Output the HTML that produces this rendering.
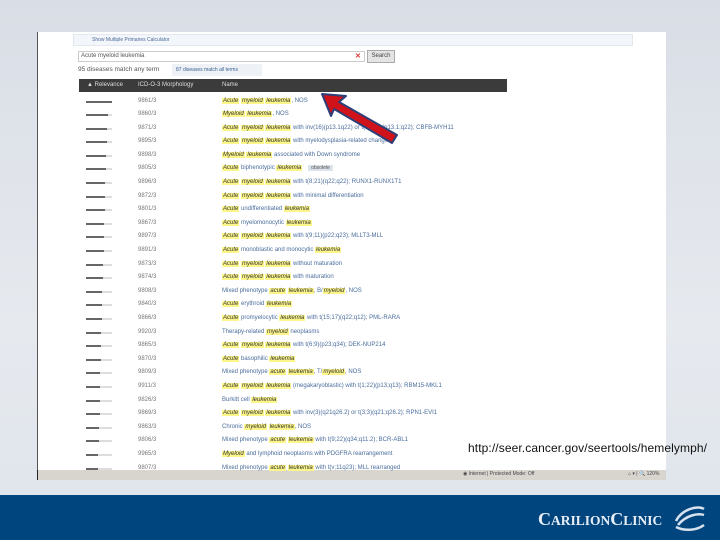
<!DOCTYPE html>
<html><head><meta charset="utf-8"><style>
*{margin:0;padding:0;box-sizing:border-box}
body{width:720px;height:540px;overflow:hidden;background:linear-gradient(#d9dee6,#e6e9ee 60%,#dfe5ec);font-family:"Liberation Sans",sans-serif;position:relative}
.band{position:absolute;left:0;top:495px;width:720px;height:45px;background:#00457e}
.panel{position:absolute;left:37px;top:32px;width:629px;height:438px;background:#fff;border-left:1px solid #555}
.status{position:absolute;left:37px;top:470px;width:629px;height:10px;background:#d8d5cf;border-left:1px solid #222}
.calc{position:absolute;left:73px;top:34px;width:560px;height:12px;background:#f3f6fa;border:1px solid #e3e8ee;font-size:5px;color:#4a6a9a;padding:2px 0 0 18px}
.search{position:absolute;left:78px;top:51px;width:287px;height:11px;border:1px solid #ccc;font-size:6px;color:#555;padding:1px 2px}
.x{position:absolute;left:355px;top:52px;color:#d33;font-size:7px;font-weight:bold}
.btn{position:absolute;left:367px;top:50px;width:28px;height:13px;background:#e4e4e4;border:1px solid #aaa;font-size:6px;color:#444;text-align:center;line-height:11px}
.match{position:absolute;left:78px;top:66px;font-size:6.5px;color:#555}
.tab{position:absolute;left:172px;top:64px;width:90px;height:12px;background:#eef2f7;font-size:5px;color:#3a5e90;padding-top:3px;padding-left:4px;white-space:nowrap}
.head{position:absolute;left:79px;top:79px;width:428px;height:13px;background:#3b3b3b;color:#ddd;font-size:6px;line-height:13px}
.head span{position:absolute}
.rows{position:absolute;left:79px;top:94.5px;width:560px;font-size:6px;line-height:13.6px;color:#4a6c9c}
.r{position:relative;height:13.6px;white-space:nowrap}
.bar{position:absolute;left:7px;top:6px;width:26px;height:2px;background:#ddd}
.bar i{display:block;height:2px;background:#666}
.c{position:absolute;left:59px;color:#777}
.n{position:absolute;left:143px}
b{font-weight:normal;font-style:italic;background:#fbf58a;color:#333;padding:0 1px}
.obs{background:#dde3ea;color:#555;font-size:5px;padding:0 3px;margin-left:4px}
.url{position:absolute;left:468px;top:441px;font-size:12px;color:#111;letter-spacing:0.1px}
.logo{position:absolute;left:538px;top:509px;color:#e8eef5;font-family:"Liberation Serif",serif;font-weight:bold;font-size:18px}
.logo small{font-size:13.5px}
</style></head><body>
<div class="panel"></div>
<div class="status"><span style="position:absolute;left:425px;top:1px;font-size:5px;color:#444">◉ Internet | Protected Mode: Off</span><span style="position:absolute;left:590px;top:1px;font-size:5px;color:#444">⌂ ▾ | 🔍 120%</span></div>
<div class="calc">Show Multiple Primaries Calculator</div>
<div class="search">Acute myeloid leukemia</div><div class="x">✕</div><div class="btn">Search</div>
<div class="match">95 diseases match any term</div><div class="tab">87 diseases match all terms</div>
<div class="head"><span style="left:8px">▲ Relevance</span><span style="left:59px">ICD-O-3 Morphology</span><span style="left:143px">Name</span></div>
<div class="rows">
<div class="r"><div class="bar"><i style="width:26px"></i></div><span class="c">9861/3</span><span class="n"><b>Acute</b> <b>myeloid</b> <b>leukemia</b>, NOS</span></div>
<div class="r"><div class="bar"><i style="width:22px"></i></div><span class="c">9860/3</span><span class="n"><b>Myeloid</b> <b>leukemia</b>, NOS</span></div>
<div class="r"><div class="bar"><i style="width:21px"></i></div><span class="c">9871/3</span><span class="n"><b>Acute</b> <b>myeloid</b> <b>leukemia</b> with inv(16)(p13.1q22) or t(16;16)(p13.1;q22); CBFB-MYH11</span></div>
<div class="r"><div class="bar"><i style="width:21px"></i></div><span class="c">9895/3</span><span class="n"><b>Acute</b> <b>myeloid</b> <b>leukemia</b> with myelodysplasia-related changes</span></div>
<div class="r"><div class="bar"><i style="width:20px"></i></div><span class="c">9898/3</span><span class="n"><b>Myeloid</b> <b>leukemia</b> associated with Down syndrome</span></div>
<div class="r"><div class="bar"><i style="width:20px"></i></div><span class="c">9805/3</span><span class="n"><b>Acute</b> biphenotypic <b>leukemia</b> <span class="obs">obsolete</span></span></div>
<div class="r"><div class="bar"><i style="width:19px"></i></div><span class="c">9896/3</span><span class="n"><b>Acute</b> <b>myeloid</b> <b>leukemia</b> with t(8;21)(q22;q22); RUNX1-RUNX1T1</span></div>
<div class="r"><div class="bar"><i style="width:19px"></i></div><span class="c">9872/3</span><span class="n"><b>Acute</b> <b>myeloid</b> <b>leukemia</b> with minimal differentiation</span></div>
<div class="r"><div class="bar"><i style="width:19px"></i></div><span class="c">9801/3</span><span class="n"><b>Acute</b> undifferentiated <b>leukemia</b></span></div>
<div class="r"><div class="bar"><i style="width:18px"></i></div><span class="c">9867/3</span><span class="n"><b>Acute</b> myelomonocytic <b>leukemia</b></span></div>
<div class="r"><div class="bar"><i style="width:18px"></i></div><span class="c">9897/3</span><span class="n"><b>Acute</b> <b>myeloid</b> <b>leukemia</b> with t(9;11)(p22;q23); MLLT3-MLL</span></div>
<div class="r"><div class="bar"><i style="width:18px"></i></div><span class="c">9891/3</span><span class="n"><b>Acute</b> monoblastic and monocytic <b>leukemia</b></span></div>
<div class="r"><div class="bar"><i style="width:17px"></i></div><span class="c">9873/3</span><span class="n"><b>Acute</b> <b>myeloid</b> <b>leukemia</b> without maturation</span></div>
<div class="r"><div class="bar"><i style="width:17px"></i></div><span class="c">9874/3</span><span class="n"><b>Acute</b> <b>myeloid</b> <b>leukemia</b> with maturation</span></div>
<div class="r"><div class="bar"><i style="width:16px"></i></div><span class="c">9808/3</span><span class="n">Mixed phenotype <b>acute</b> <b>leukemia</b>, B/<b>myeloid</b>, NOS</span></div>
<div class="r"><div class="bar"><i style="width:16px"></i></div><span class="c">9840/3</span><span class="n"><b>Acute</b> erythroid <b>leukemia</b></span></div>
<div class="r"><div class="bar"><i style="width:16px"></i></div><span class="c">9866/3</span><span class="n"><b>Acute</b> promyelocytic <b>leukemia</b> with t(15;17)(q22;q12); PML-RARA</span></div>
<div class="r"><div class="bar"><i style="width:15px"></i></div><span class="c">9920/3</span><span class="n">Therapy-related <b>myeloid</b> neoplasms</span></div>
<div class="r"><div class="bar"><i style="width:15px"></i></div><span class="c">9865/3</span><span class="n"><b>Acute</b> <b>myeloid</b> <b>leukemia</b> with t(6;9)(p23;q34); DEK-NUP214</span></div>
<div class="r"><div class="bar"><i style="width:15px"></i></div><span class="c">9870/3</span><span class="n"><b>Acute</b> basophilic <b>leukemia</b></span></div>
<div class="r"><div class="bar"><i style="width:14px"></i></div><span class="c">9809/3</span><span class="n">Mixed phenotype <b>acute</b> <b>leukemia</b>, T/<b>myeloid</b>, NOS</span></div>
<div class="r"><div class="bar"><i style="width:14px"></i></div><span class="c">9911/3</span><span class="n"><b>Acute</b> <b>myeloid</b> <b>leukemia</b> (megakaryoblastic) with t(1;22)(p13;q13); RBM15-MKL1</span></div>
<div class="r"><div class="bar"><i style="width:14px"></i></div><span class="c">9826/3</span><span class="n">Burkitt cell <b>leukemia</b></span></div>
<div class="r"><div class="bar"><i style="width:14px"></i></div><span class="c">9869/3</span><span class="n"><b>Acute</b> <b>myeloid</b> <b>leukemia</b> with inv(3)(q21q26.2) or t(3;3)(q21;q26.2); RPN1-EVI1</span></div>
<div class="r"><div class="bar"><i style="width:13px"></i></div><span class="c">9863/3</span><span class="n">Chronic <b>myeloid</b> <b>leukemia</b>, NOS</span></div>
<div class="r"><div class="bar"><i style="width:13px"></i></div><span class="c">9806/3</span><span class="n">Mixed phenotype <b>acute</b> <b>leukemia</b> with t(9;22)(q34;q11.2); BCR-ABL1</span></div>
<div class="r"><div class="bar"><i style="width:12px"></i></div><span class="c">9965/3</span><span class="n"><b>Myeloid</b> and lymphoid neoplasms with PDGFRA rearrangement</span></div>
<div class="r"><div class="bar"><i style="width:12px"></i></div><span class="c">9807/3</span><span class="n">Mixed phenotype <b>acute</b> <b>leukemia</b> with t(v;11q23); MLL rearranged</span></div>
</div>
<svg style="position:absolute;left:0;top:0" width="720" height="540">
<polygon points="322,94 346,96 339,102 397,135 392,143 334,109 331,116" fill="#d0131a" stroke="#2c3f78" stroke-width="2" stroke-linejoin="round"/>
</svg>
<div class="url">http://seer.cancer.gov/seertools/hemelymph/</div>
<div class="band"></div>
<div class="logo">C<small>ARILION</small>C<small>LINIC</small></div>
<svg style="position:absolute;left:672px;top:503px" width="36" height="30"><g fill="none" stroke="#d8e2ee" stroke-width="2.5"><path d="M4 18 C10 6 26 2 32 6"/><path d="M6 22 C14 12 26 10 32 12"/><path d="M4 24 C12 28 24 28 32 22"/></g></svg>
</body></html>
